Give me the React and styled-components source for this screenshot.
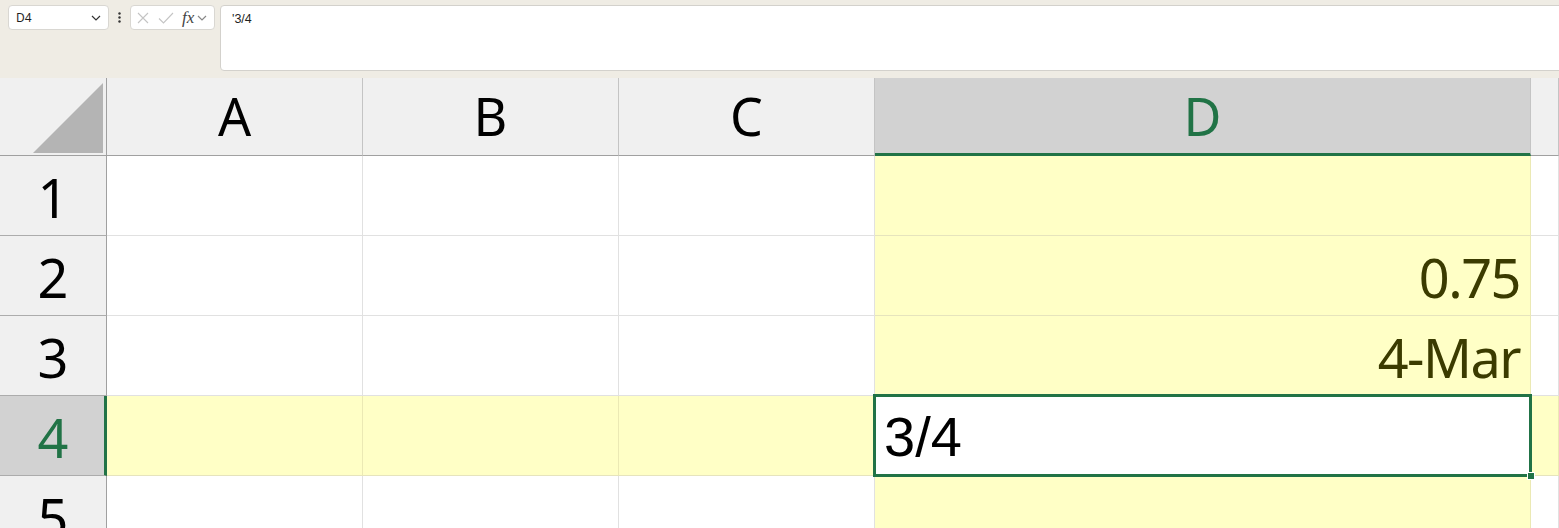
import React from 'react';
import styled, { createGlobalStyle, css } from 'styled-components';

const GREEN = '#217346';
const YELLOW = '#ffffc6';

const GlobalStyle = createGlobalStyle`
  html, body {
    margin: 0;
    padding: 0;
    height: 528px;
    overflow: hidden;
    background: #ffffff;
  }
  * {
    box-sizing: border-box;
  }
`;

const Page = styled.div`
  width: 1559px;
  height: 528px;
  overflow: hidden;
`;

/* ---------- formula bar ---------- */

const Toolbar = styled.div`
  display: flex;
  align-items: flex-start;
  height: 78px;
  padding: 5px 0 0 8px;
  background: #efece4;
`;

const NameBox = styled.div`
  display: flex;
  align-items: center;
  justify-content: space-between;
  width: 101px;
  height: 25px;
  padding: 0 7px 0 7px;
  background: #ffffff;
  border: 1px solid #d9d7d2;
  border-radius: 4px;
  font-family: 'Noto Sans', sans-serif;
  font-size: 12px;
  color: #1f1f1f;
`;

const Dots = styled.div`
  display: flex;
  align-items: center;
  justify-content: center;
  width: 21px;
  height: 25px;
`;

const Controls = styled.div`
  display: flex;
  align-items: center;
  width: 85px;
  height: 25px;
  padding: 0 0 0 6px;
  gap: 9px;
  background: #ffffff;
  border: 1px solid #d9d7d2;
  border-radius: 4px;
`;

const Fx = styled.span`
  display: flex;
  align-items: center;
  gap: 3px;
  font-family: 'Liberation Serif', serif;
  font-style: italic;
  font-size: 17px;
  line-height: 1;
  color: #444444;
  margin-left: -1px;
`;

const FormulaInput = styled.div`
  flex: 1;
  height: 66px;
  margin-left: 5px;
  margin-right: -8px;
  padding: 6px 11px;
  background: #ffffff;
  border: 1px solid #d3d1cc;
  border-radius: 4px;
  font-family: 'Liberation Sans', Arial, sans-serif;
  font-size: 12.5px;
  color: #1f1f1f;
`;

const Chevron = ({ color = '#333' }) => (
  <svg width="10" height="6" viewBox="0 0 10 6">
    <path d="M1 1l4 4 4-4" fill="none" stroke={color} strokeWidth="1.2" />
  </svg>
);

/* ---------- sheet grid ---------- */

const Sheet = styled.div`
  display: grid;
  grid-template-columns: 107px 256px 256px 256px 656px 1fr;
  grid-template-rows: 78px repeat(5, 80px);
`;

const Corner = styled.div`
  display: flex;
  align-items: flex-end;
  justify-content: flex-end;
  padding: 0 3px 2px 0;
  background: #f0f0f0;
  border-right: 1px solid #a0a0a0;
  border-bottom: 1px solid #a0a0a0;
`;

const HeaderText = css`
  display: flex;
  align-items: center;
  justify-content: center;
  font-family: 'Noto Sans', sans-serif;
  line-height: 1;
  color: ${(p) => (p.$active ? GREEN : '#000000')};
  background: ${(p) => (p.$active ? '#d2d2d2' : '#f0f0f0')};
`;

const ColHeader = styled.div`
  ${HeaderText};
  font-size: 52px;
  padding-top: 1px;
  border-right: 1px solid #c4c4c4;
  border-bottom: ${(p) => (p.$active ? `3px solid ${GREEN}` : '1px solid #a0a0a0')};
  padding-bottom: ${(p) => (p.$active ? '0' : '2px')};
`;

const RowHeader = styled.div`
  ${HeaderText};
  font-size: 54px;
  padding-top: 2px;
  border-bottom: 1px solid #acacac;
  border-right: ${(p) => (p.$active ? `3px solid ${GREEN}` : '1px solid #a0a0a0')};
  padding-left: ${(p) => (p.$active ? '2px' : '0')};
`;

const Cell = styled.div`
  position: relative;
  display: flex;
  align-items: center;
  justify-content: ${(p) => (p.$align === 'right' ? 'flex-end' : 'flex-start')};
  padding: 2px 10px 0 9px;
  background: ${(p) => (p.$selected ? '#ffffff' : p.$lit ? YELLOW : '#ffffff')};
  border-right: 1px solid ${(p) => (p.$lit ? '#ebe9b4' : '#e1e1e1')};
  border-bottom: 1px solid ${(p) => (p.$lit ? '#e6e4bd' : '#e1e1e1')};
  font-family: ${(p) => (p.$plain ? "'Liberation Sans', Arial, sans-serif" : "'Noto Sans', sans-serif")};
  font-size: ${(p) => (p.$plain ? '56px' : '54px')};
  letter-spacing: ${(p) => (p.$plain ? '0' : '-1.5px')};
  line-height: 1;
  color: ${(p) => (p.$plain ? '#000000' : '#3b3b00')};
`;

const Selection = styled.div`
  position: absolute;
  top: -2px;
  left: -2px;
  right: -2px;
  bottom: -2px;
  border: 3px solid ${GREEN};
  z-index: 2;
  pointer-events: none;
`;

const FillHandle = styled.div`
  position: absolute;
  right: -5px;
  bottom: -5px;
  width: 8px;
  height: 8px;
  background: ${GREEN};
  border: 1px solid #ffffff;
  z-index: 3;
`;

const columns = ['A', 'B', 'C', 'D', 'E'];
const activeCol = 'D';
const activeRow = 4;

const values = {
  D2: { text: '0.75', align: 'right' },
  D3: { text: '4-Mar', align: 'right' },
  D4: { text: '3/4', align: 'left', plain: true },
};

const App = () => {
  const rows = [1, 2, 3, 4, 5];
  return (
    <Page>
      <GlobalStyle />
      <Toolbar>
        <NameBox>
          <span>D4</span>
          <Chevron />
        </NameBox>
        <Dots>
          <svg width="3" height="11" viewBox="0 0 3 11">
            <circle cx="1.5" cy="1.5" r="1.2" fill="#333" />
            <circle cx="1.5" cy="5.5" r="1.2" fill="#333" />
            <circle cx="1.5" cy="9.5" r="1.2" fill="#333" />
          </svg>
        </Dots>
        <Controls>
          <svg width="12" height="12" viewBox="0 0 12 12">
            <path d="M1 1l10 10M11 1L1 11" stroke="#c4c4c4" strokeWidth="1.1" />
          </svg>
          <svg width="16" height="12" viewBox="0 0 16 12">
            <path d="M1 6.5l4.5 4.5L15 1" fill="none" stroke="#c4c4c4" strokeWidth="1.1" />
          </svg>
          <Fx>
            fx
            <Chevron color="#888" />
          </Fx>
        </Controls>
        <FormulaInput>'3/4</FormulaInput>
      </Toolbar>

      <Sheet>
        <Corner>
          <svg width="70" height="70" viewBox="0 0 70 70">
            <polygon points="0,70 70,0 70,70" fill="#b4b4b4" />
          </svg>
        </Corner>
        {columns.map((c) => (
          <ColHeader key={c} $active={c === activeCol}>
            {c === 'E' ? '' : c}
          </ColHeader>
        ))}
        {rows.map((r) => (
          <React.Fragment key={r}>
            <RowHeader $active={r === activeRow}>{r}</RowHeader>
            {columns.map((c) => {
              const id = `${c}${r}`;
              const v = values[id];
              const selected = c === activeCol && r === activeRow;
              const lit = c === activeCol || r === activeRow;
              return (
                <Cell
                  key={id}
                  $lit={lit}
                  $selected={selected}
                  $align={v ? v.align : 'left'}
                  $plain={v && v.plain}
                >
                  {v ? v.text : ''}
                  {selected && (
                    <>
                      <Selection />
                      <FillHandle />
                    </>
                  )}
                </Cell>
              );
            })}
          </React.Fragment>
        ))}
      </Sheet>
    </Page>
  );
};

export default App;
